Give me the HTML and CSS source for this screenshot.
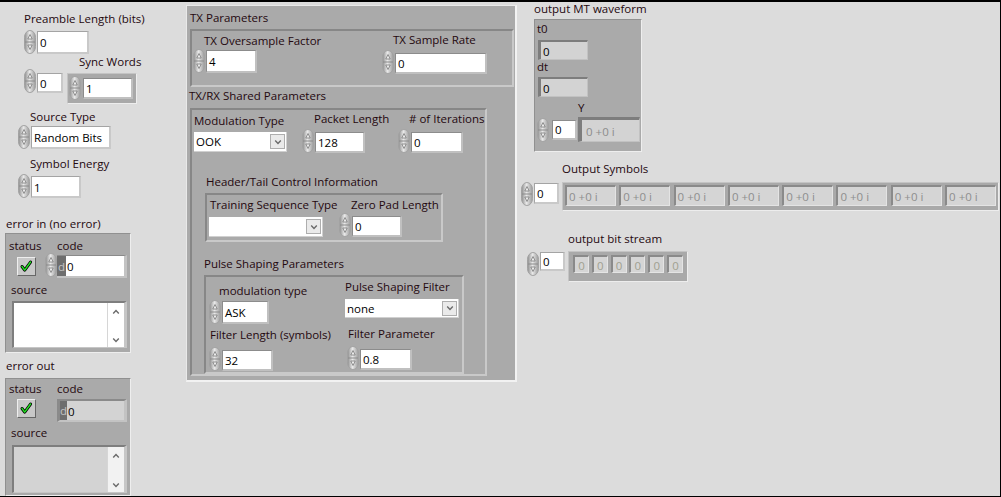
FILE: index.html
```html
<!DOCTYPE html>
<html>
<head>
<meta charset="utf-8">
<link rel="stylesheet" href="styles.css">
</head>
<body>
<svg class="defs" width="0" height="0" aria-hidden="true">
  <defs>
    <linearGradient id="spg" x1="0" y1="0" x2="1" y2="0">
      <stop offset="0" stop-color="#8c8c8c"/>
      <stop offset="0.45" stop-color="#e9e9e9"/>
      <stop offset="1" stop-color="#9a9a9a"/>
    </linearGradient>
    <symbol id="spin" viewBox="0 0 12 24">
      <rect x="0.5" y="0.5" width="11" height="23" rx="5.5" ry="7" fill="url(#spg)" stroke="#a2a2a2"/>
      <line x1="1" y1="12" x2="11" y2="12" stroke="#8a8a8a" stroke-width="1"/>
      <path d="M6 4.5 L8.2 9 H3.8 Z" fill="#eeeeee" stroke="#7a7a7a" stroke-width="0.8" stroke-linejoin="round"/>
      <path d="M6 19.5 L8.2 15 H3.8 Z" fill="#eeeeee" stroke="#7a7a7a" stroke-width="0.8" stroke-linejoin="round"/>
    </symbol>
    <symbol id="chev" viewBox="0 0 10 10">
      <path d="M2.2 3.5 L5 6.5 L7.8 3.5" fill="none" stroke="#6a6a6a" stroke-width="1.4"/>
    </symbol>
    <symbol id="chevu" viewBox="0 0 10 10">
      <path d="M2.2 6.5 L5 3.5 L7.8 6.5" fill="none" stroke="#6a6a6a" stroke-width="1.4"/>
    </symbol>
    <symbol id="chk" viewBox="0 0 19 19">
      <path d="M4.5 9.5 L7.5 13.5 L14 4.5" fill="none" stroke="#000" stroke-width="3.4" stroke-linecap="round" stroke-linejoin="round"/>
      <path d="M4.5 9.5 L7.5 13.5 L14 4.5" fill="none" stroke="#22e622" stroke-width="1.6" stroke-linecap="round" stroke-linejoin="round"/>
    </symbol>
  </defs>
</svg>

<div class="panel">

  <!-- LEFT COLUMN -->
  <div class="col-left">
    <span class="lbl l-pre">Preamble Length (bits)</span>
    <div class="num n-pre">
      <svg class="spin"><use href="#spin"/></svg>
      <div class="fld w52 h23">0</div>
    </div>

    <span class="lbl l-sync">Sync Words</span>
    <div class="sync">
      <svg class="spin"><use href="#spin"/></svg>
      <div class="fld w26 h20 f-syncidx">0</div>
      <div class="arr a-sync">
        <svg class="spin"><use href="#spin"/></svg>
        <div class="fld w50 h21 f-syncval">1</div>
      </div>
    </div>

    <span class="lbl l-src">Source Type</span>
    <div class="num n-src">
      <svg class="spin"><use href="#spin"/></svg>
      <div class="fld w80 h23">Random Bits</div>
    </div>

    <span class="lbl l-sym">Symbol Energy</span>
    <div class="num n-sym">
      <svg class="spin"><use href="#spin"/></svg>
      <div class="fld w50 h22">1</div>
    </div>

    <span class="lbl l-ein">error in (no error)</span>
    <div class="clu c-ein">
      <div class="crow c-lbls1">
        <span class="lbl l-status">status</span>
        <span class="lbl">code</span>
      </div>
      <div class="crow2">
        <div class="chkbox cb-in"><svg class="chk"><use href="#chk"/></svg></div>
        <svg class="spin sp-code"><use href="#spin"/></svg>
        <div class="code code-in"><span class="radix">d</span><span class="cv">0</span></div>
      </div>
      <span class="lbl l-source1">source</span>
      <div class="tbox tb-in">
        <div class="tarea"></div>
        <div class="sb"><svg class="sbi"><use href="#chevu"/></svg><svg class="sbi"><use href="#chev"/></svg></div>
      </div>
    </div>

    <span class="lbl l-eout">error out</span>
    <div class="clu c-eout">
      <div class="crow c-lbls2">
        <span class="lbl l-status">status</span>
        <span class="lbl">code</span>
      </div>
      <div class="crow2">
        <div class="chkbox cb-out"><svg class="chk"><use href="#chk"/></svg></div>
        <div class="code code-out"><span class="radix">d</span><span class="cv">0</span></div>
      </div>
      <span class="lbl l-source2">source</span>
      <div class="tbox tb-out">
        <div class="tarea"></div>
        <div class="sb"><svg class="sbi"><use href="#chevu"/></svg><svg class="sbi"><use href="#chev"/></svg></div>
      </div>
    </div>
  </div>

  <!-- MIDDLE CLUSTER -->
  <div class="outer">
    <span class="lbl l-txp">TX Parameters</span>
    <div class="sub s-tx">
      <div class="col ca-tx">
        <span class="lbl l-txo">TX Oversample Factor</span>
        <div class="num n-txo">
          <svg class="spin"><use href="#spin"/></svg>
          <div class="fld w51 h23">4</div>
        </div>
      </div>
      <div class="col">
        <span class="lbl l-txr">TX Sample Rate</span>
        <div class="num n-txr">
          <svg class="spin"><use href="#spin"/></svg>
          <div class="fld w92 h21">0</div>
        </div>
      </div>
    </div>

    <span class="lbl l-txrx">TX/RX Shared Parameters</span>
    <div class="sub s-txrx">
      <div class="row1">
        <div class="col c1">
          <span class="lbl l-mod">Modulation Type</span>
          <div class="ring r-mod"><span>OOK</span><span class="dd"><svg class="ddi"><use href="#chev"/></svg></span></div>
        </div>
        <div class="col c2">
          <span class="lbl l-pkt">Packet Length</span>
          <div class="num n-pkt">
            <svg class="spin"><use href="#spin"/></svg>
            <div class="fld w50 h21">128</div>
          </div>
        </div>
        <div class="col c3">
          <span class="lbl l-iter"># of Iterations</span>
          <div class="num n-iter">
            <svg class="spin"><use href="#spin"/></svg>
            <div class="fld w52 h21">0</div>
          </div>
        </div>
      </div>

      <span class="lbl l-ht">Header/Tail Control Information</span>
      <div class="sub s-ht">
        <div class="col ca-ht">
          <span class="lbl l-tst">Training Sequence Type</span>
          <div class="ring r-tst"><span></span><span class="dd"><svg class="ddi"><use href="#chev"/></svg></span></div>
        </div>
        <div class="col">
          <span class="lbl l-zp">Zero Pad Length</span>
          <div class="num n-zp">
            <svg class="spin"><use href="#spin"/></svg>
            <div class="fld w50 h21">0</div>
          </div>
        </div>
      </div>

      <span class="lbl l-ps">Pulse Shaping Parameters</span>
      <div class="sub s-ps">
        <div class="col ca-ps">
          <span class="lbl l-mt">modulation type</span>
          <div class="num n-mt">
            <svg class="spin"><use href="#spin"/></svg>
            <div class="fld w47 h23">ASK</div>
          </div>
          <span class="lbl l-fl">Filter Length (symbols)</span>
          <div class="num n-fl">
            <svg class="spin"><use href="#spin"/></svg>
            <div class="fld w51 h21">32</div>
          </div>
        </div>
        <div class="col">
          <span class="lbl l-psf">Pulse Shaping Filter</span>
          <div class="ring r-psf"><span>none</span><span class="dd"><svg class="ddi"><use href="#chev"/></svg></span></div>
          <span class="lbl l-fp">Filter Parameter</span>
          <div class="num n-fp">
            <svg class="spin"><use href="#spin"/></svg>
            <div class="fld w52 h21">0.8</div>
          </div>
        </div>
      </div>
    </div>
  </div>

  <!-- RIGHT COLUMN -->
  <div class="col-right">
    <span class="lbl l-mtw">output MT waveform</span>
    <div class="clu c-mt">
      <span class="lbl l-t0">t0</span>
      <div class="ind i-t0">0</div>
      <span class="lbl l-dt">dt</span>
      <div class="ind i-dt">0</div>
      <span class="lbl l-y">Y</span>
      <div class="yrow">
        <svg class="spin sp-y"><use href="#spin"/></svg>
        <div class="fld w25 h20 f-yidx">0</div>
        <div class="ind y-el"><span class="gr">0 +0 i</span></div>
      </div>
    </div>

    <span class="lbl l-os">Output Symbols</span>
    <div class="irow r-os">
      <svg class="spin"><use href="#spin"/></svg>
      <div class="fld w25 h21 f-osidx">0</div>
      <div class="arr a-os">
        <div class="el">0 +0 i</div><div class="el">0 +0 i</div><div class="el">0 +0 i</div><div class="el">0 +0 i</div>
        <div class="el">0 +0 i</div><div class="el">0 +0 i</div><div class="el">0 +0 i</div><div class="el">0 +0 i</div>
      </div>
    </div>

    <span class="lbl l-obs">output bit stream</span>
    <div class="irow r-obs">
      <svg class="spin sp-obs"><use href="#spin"/></svg>
      <div class="fld w25 h19 f-obsidx">0</div>
      <div class="arr a-obs">
        <div class="el eb">0</div><div class="el eb">0</div><div class="el eb">0</div>
        <div class="el eb">0</div><div class="el eb">0</div><div class="el eb">0</div>
      </div>
    </div>
  </div>

</div>
</body>
</html>
```

FILE: styles.css
```css
* { box-sizing: border-box; }
html, body { margin: 0; padding: 0; }
body {
  font-family: "Open Sans", "Noto Sans", sans-serif;
  font-size: 11.5px;
  color: #000;
  background: #dcdcdc;
}
.defs { display: block; width: 0; height: 0; overflow: hidden; }

.panel {
  width: 1001px;
  height: 497px;
  background: #dcdcdc;
  border-top: 2px solid #000;
  border-right: 1px solid #000;
  border-bottom: 1px solid #000;
  display: flex;
  align-items: flex-start;
  overflow: hidden;
}

/* generic pieces */
.lbl { display: block; height: 14px; line-height: 14px; white-space: nowrap; color: #24080f; }
.spin { display: block; width: 12px; height: 24px; flex: none; }
.num { display: flex; align-items: flex-end; }
.col { display: flex; flex-direction: column; align-items: flex-start; }

.fld {
  display: flex;
  align-items: center;
  flex: none;
  margin-left: 1px;
  background: #fff;
  border-style: solid;
  border-width: 1px 2px 2px 1px;
  border-color: #a4a4a4 #c9c9c9 #c9c9c9 #a4a4a4;
  padding: 1px 0 0 2px;
  white-space: nowrap;
  overflow: hidden;
}
.clu .fld, .sub .fld, .arr .fld { border-color: #8c8c8c #c0c0c0 #c0c0c0 #8c8c8c; }

.w25 { width: 25px; } .w26 { width: 26px; } .w47 { width: 47px; }
.w50 { width: 50px; } .w51 { width: 51px; } .w52 { width: 52px; }
.w80 { width: 80px; } .w92 { width: 92px; }
.h19 { height: 19px; } .h20 { height: 20px; } .h21 { height: 21px; }
.h22 { height: 22px; } .h23 { height: 23px; }

.clu {
  background: #aaaaaa;
  border: 1px solid;
  border-color: #909090 #eeeeee #eeeeee #909090;
}
.sub {
  background: #aaaaaa;
  border: 2px solid;
  border-color: #878787 #c9c9c9 #c9c9c9 #878787;
  flex: none;
}
.arr {
  background: #a9a9a9;
  border: 1px solid;
  border-color: #c4c4c4 #ededed #ededed #c4c4c4;
  flex: none;
}

.ring {
  display: flex;
  align-items: center;
  justify-content: space-between;
  background: #fff;
  border-style: solid;
  border-width: 0 1px 1px 0;
  border-color: #d0d0d0;
  padding-left: 2px;
}
.dd {
  width: 15px;
  height: 15px;
  margin-right: 1px;
  background: #eaeaea;
  border: 1px solid #aeaeae;
  display: flex;
  align-items: center;
  justify-content: center;
}
.ddi { width: 10px; height: 10px; display: block; }

.chkbox {
  width: 19px;
  height: 19px;
  background: #c8c8c8;
  border: 1px solid;
  border-color: #eeeeee #666666 #666666 #eeeeee;
  flex: none;
  display: flex;
  align-items: center;
  justify-content: center;
}
.chk { width: 17px; height: 17px; display: block; }

.code {
  display: flex;
  width: 70px;
  height: 23px;
  flex: none;
  border-style: solid;
  border-width: 1px 3px 2px 0;
  border-color: #8a8a8a #c3c3c3 #c3c3c3 #8a8a8a;
}
.radix { width: 9px; background: #6e6e6e; color: #c4c4c4; display: flex; align-items: center; padding-left: 1px; }
.cv { flex: 1; background: #fff; display: flex; align-items: center; padding: 1px 0 0 1px; }

.tbox {
  display: flex;
  width: 115px;
  border-style: solid;
  border-width: 2px 3px 1px 2px;
  border-color: #7e7e7e #c6c6c6 #c6c6c6 #7e7e7e;
  background: #fff;
}
.tarea { flex: 1; }
.sb {
  width: 17px;
  border-left: 1px solid #d6d6d6;
  background: #fff;
  display: flex;
  flex-direction: column;
  justify-content: space-between;
  align-items: center;
  padding: 4px 0 2px;
}
.sbi { width: 10px; height: 10px; display: block; }

.ind {
  display: flex;
  align-items: center;
  background: #d3d3d3;
  border-style: solid;
  border-width: 2px 1px 1px 3px;
  border-color: #7d7d7d #c2c2c2 #c2c2c2 #7d7d7d;
  padding: 1px 0 0 2px;
  flex: none;
}
.gr { color: #8c8c8c; }
.el {
  display: flex;
  align-items: center;
  background: #d5d5d5;
  border-style: solid;
  border-width: 2px 1px 1px 2px;
  border-color: #8a8a8a #e4e4e4 #e4e4e4 #8a8a8a;
  color: #8e8e8e;
  padding: 1px 0 0 2px;
  height: 21px;
  white-space: nowrap;
}

/* ---------- LEFT COLUMN ---------- */
.col-left { width: 186px; flex: none; }
.l-pre { margin: 10px 0 0 24px; }
.n-pre { margin: 4px 0 0 24px; }
.l-sync { margin: 1px 0 0 79px; }
.sync { display: flex; align-items: flex-start; margin-left: 24px; }
.f-syncidx { margin-top: 4px; }
.a-sync { display: flex; align-items: flex-start; width: 70px; height: 31px; margin: 4px 0 0 4px; padding: 2px 0 0 1px; }
.f-syncval { margin: 2px 0 0 2px; }
.l-src { margin: 6px 0 0 30px; }
.n-src { margin: 1px 0 0 18px; }
.l-sym { margin: 8px 0 0 30px; }
.n-sym { margin: 3px 0 0 18px; }
.l-ein { margin: 19px 0 0 6px; }
.c-ein { width: 126px; height: 120px; margin: 2px 0 0 5px; }
.crow { display: flex; }
.l-status { width: 48px; margin-left: 3px; }
.c-lbls1 { margin-top: 5px; }
.crow2 { display: flex; align-items: flex-start; }
.cb-in { margin: 4px 0 0 11px; }
.sp-code { margin-left: 9px; }
.code-in { margin-top: 2px; }
.l-source1 { margin: 5px 0 0 5px; }
.tb-in { height: 47px; margin: 4px 0 0 6px; }
.l-eout { margin: 6px 0 0 6px; }
.c-eout { width: 126px; height: 118px; margin: 5px 0 0 5px; }
.c-lbls2 { margin-top: 3px; }
.cb-out { margin: 3px 0 0 11px; }
.code-out { margin: 3px 0 0 21px; border-width: 2px 3px 2px 3px; }
.code-out .radix { width: 7px; padding-left: 0; }
.code-out .cv { background: #d3d3d3; }
.l-source2 { margin: 4px 0 0 5px; }
.tb-out { height: 48px; margin: 5px 0 0 6px; background: #d3d3d3; }
.tb-out .sb { background: #f2f2f2; }

/* ---------- MIDDLE CLUSTER ---------- */
.outer {
  flex: none;
  width: 331px;
  height: 377px;
  margin-top: 3px;
  background: #aaaaaa;
  border-style: solid;
  border-width: 1px 2px 2px 1px;
  border-color: #e9e9e9 #f2f2f2 #f2f2f2 #e9e9e9;
}
.l-txp { margin: 5px 0 0 3px; }
.s-tx { display: flex; width: 324px; height: 58px; margin: 4px 0 0 3px; }
.ca-tx { width: 189px; margin-left: 1px; }
.l-txo { margin: 3px 0 0 11px; }
.n-txo { margin-top: 1px; }
.l-txr { margin: 2px 0 0 11px; }
.n-txr { margin-top: 3px; }

.l-txrx { margin: 2px 0 0 2px; }
.s-txrx { width: 297px; height: 268px; margin: 5px 0 0 3px; }
.row1 { display: flex; }
.c1 { width: 108px; margin-left: 2px; }
.l-mod { margin-top: 4px; }
.r-mod { width: 93px; height: 20px; margin-top: 4px; }
.c2 { width: 96px; }
.l-pkt { margin: 2px 0 0 12px; }
.n-pkt { margin-top: 3px; }
.l-iter { margin: 2px 0 0 11px; }
.n-iter { margin-top: 3px; }

.l-ht { margin: 22px 0 0 14px; }
.s-ht { display: flex; width: 238px; height: 49px; margin: 4px 0 0 13px; }
.ca-ht { width: 132px; padding-left: 2px; }
.l-tst { margin: 3px 0 0 1px; }
.r-tst { width: 114px; height: 20px; margin-top: 5px; }
.l-zp { margin: 3px 0 0 12px; }
.n-zp { margin-top: 1px; }

.l-ps { margin: 15px 0 0 12px; }
.s-ps { display: flex; width: 260px; height: 99px; margin: 4px 0 0 12px; }
.ca-ps { width: 139px; padding-left: 3px; }
.l-mt { margin: 7px 0 0 10px; }
.n-mt { margin-top: 2px; }
.l-fl { margin: 4px 0 0 1px; }
.n-fl { margin-top: 5px; }
.l-psf { margin-top: 3px; }
.r-psf { width: 114px; height: 19px; margin-top: 5px; }
.l-fp { margin: 9px 0 0 3px; }
.n-fp { margin: 5px 0 0 2px; }

/* ---------- RIGHT COLUMN ---------- */
.col-right { flex: 1; }
.l-mtw { margin: 0 0 0 17px; }
.c-mt { width: 108px; height: 133px; margin: 3px 0 0 17px; }
.l-t0 { margin: 2px 0 0 2px; }
.i-t0 { width: 50px; height: 20px; margin: 4px 0 0 3px; }
.l-dt { margin: 0 0 0 2px; }
.i-dt { width: 50px; height: 20px; margin: 3px 0 0 3px; }
.l-y { margin: 4px 0 0 43px; }
.yrow { display: flex; align-items: center; height: 25px; margin-top: 2px; }
.sp-y { margin-left: 2px; }
.f-yidx { margin-left: 3px; }
.y-el { width: 62px; height: 25px; margin-left: 1px; border-width: 3px 1px 1px 4px; padding-left: 4px; }

.l-os { margin: 10px 0 0 45px; }
.irow { display: flex; align-items: flex-start; }
.r-os { margin: 6px 0 0 4px; }
.f-osidx { margin-top: 1px; }
.a-os {
  display: grid;
  grid-template-columns: repeat(8, 51px);
  column-gap: 3.3px;
  width: 437px;
  height: 29px;
  margin-left: 3px;
  padding: 2px 0 0 2px;
}

.l-obs { margin: 21px 0 0 51px; }
.r-obs { margin: 5px 0 0 10px; }
.sp-obs { margin-top: 1px; }
.f-obsidx { margin-top: 1px; }
.a-obs {
  display: grid;
  grid-template-columns: repeat(6, 16px);
  column-gap: 2.8px;
  width: 120px;
  height: 31px;
  margin-left: 3px;
  padding: 3px 0 0 4px;
}
.eb { height: 18px; justify-content: center; padding: 1px 0 0 0; color: #a0a090; }
```
